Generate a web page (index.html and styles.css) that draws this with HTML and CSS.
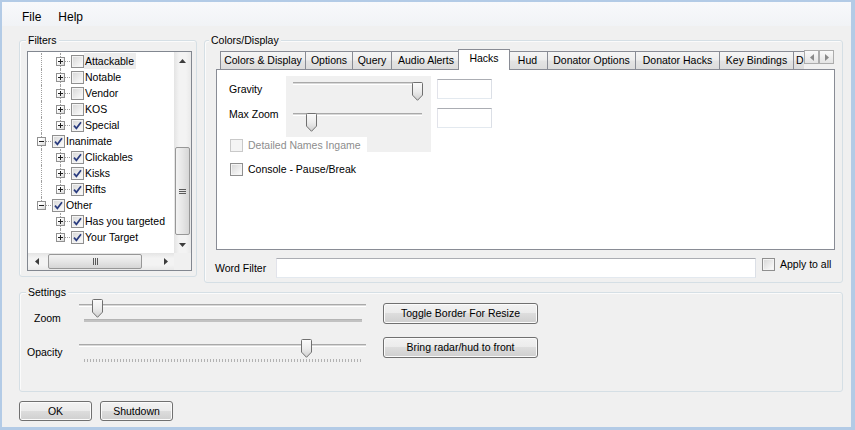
FILE: index.html
```html
<!DOCTYPE html>
<html>
<head>
<meta charset="utf-8">
<link rel="stylesheet" href="styles.css">
</head>
<body>
<div class="window">
  <svg class="defs" width="0" height="0">
    <defs>
      <linearGradient id="thumbGrad" x1="0" y1="0" x2="0" y2="1">
        <stop offset="0" stop-color="#fbfbfb"/>
        <stop offset="0.5" stop-color="#ececec"/>
        <stop offset="1" stop-color="#cfcfcf"/>
      </linearGradient>
    </defs>
  </svg>
  <div class="menubar">
    <span class="menu-item">File</span>
    <span class="menu-item">Help</span>
  </div>
  <div class="main">
    <div class="top-row">
      <section class="group filters">
        <div class="group-title">Filters</div>
        <div class="tree">
          <div class="tree-body">
            <div class="row"><span class="g v"></span><span class="g v h"><span class="exp plus"></span></span><span class="cb"></span><span class="lbl hl">Attackable</span></div>
            <div class="row"><span class="g v"></span><span class="g v h"><span class="exp plus"></span></span><span class="cb"></span><span class="lbl">Notable</span></div>
            <div class="row"><span class="g v"></span><span class="g v h"><span class="exp plus"></span></span><span class="cb"></span><span class="lbl">Vendor</span></div>
            <div class="row"><span class="g v"></span><span class="g v h"><span class="exp plus"></span></span><span class="cb"></span><span class="lbl">KOS</span></div>
            <div class="row"><span class="g v"></span><span class="g vt h"><span class="exp plus"></span></span><span class="cb"><svg width="11" height="11" viewBox="0 0 11 11"><path d="M2 5.6l2.4 2.7L9 2.2" fill="none" stroke="#2a3c7f" stroke-width="1.7"/></svg></span><span class="lbl">Special</span></div>
            <div class="row"><span class="g v h"><span class="exp"></span></span><span class="cb"><svg width="11" height="11" viewBox="0 0 11 11"><path d="M2 5.6l2.4 2.7L9 2.2" fill="none" stroke="#2a3c7f" stroke-width="1.7"/></svg></span><span class="lbl">Inanimate</span></div>
            <div class="row"><span class="g v"></span><span class="g v h"><span class="exp plus"></span></span><span class="cb"><svg width="11" height="11" viewBox="0 0 11 11"><path d="M2 5.6l2.4 2.7L9 2.2" fill="none" stroke="#2a3c7f" stroke-width="1.7"/></svg></span><span class="lbl">Clickables</span></div>
            <div class="row"><span class="g v"></span><span class="g v h"><span class="exp plus"></span></span><span class="cb"><svg width="11" height="11" viewBox="0 0 11 11"><path d="M2 5.6l2.4 2.7L9 2.2" fill="none" stroke="#2a3c7f" stroke-width="1.7"/></svg></span><span class="lbl">Kisks</span></div>
            <div class="row"><span class="g v"></span><span class="g vt h"><span class="exp plus"></span></span><span class="cb"><svg width="11" height="11" viewBox="0 0 11 11"><path d="M2 5.6l2.4 2.7L9 2.2" fill="none" stroke="#2a3c7f" stroke-width="1.7"/></svg></span><span class="lbl">Rifts</span></div>
            <div class="row"><span class="g vt h"><span class="exp"></span></span><span class="cb"><svg width="11" height="11" viewBox="0 0 11 11"><path d="M2 5.6l2.4 2.7L9 2.2" fill="none" stroke="#2a3c7f" stroke-width="1.7"/></svg></span><span class="lbl">Other</span></div>
            <div class="row"><span class="g"></span><span class="g v h"><span class="exp plus"></span></span><span class="cb"><svg width="11" height="11" viewBox="0 0 11 11"><path d="M2 5.6l2.4 2.7L9 2.2" fill="none" stroke="#2a3c7f" stroke-width="1.7"/></svg></span><span class="lbl">Has you targeted</span></div>
            <div class="row"><span class="g"></span><span class="g vt h"><span class="exp plus"></span></span><span class="cb"><svg width="11" height="11" viewBox="0 0 11 11"><path d="M2 5.6l2.4 2.7L9 2.2" fill="none" stroke="#2a3c7f" stroke-width="1.7"/></svg></span><span class="lbl">Your Target</span></div>
          </div>
          <div class="vscroll">
            <div class="sb-btn"><svg width="7" height="4" viewBox="0 0 7 4"><path d="M0 4L3.5 0L7 4Z" fill="#3c3c3c"/></svg></div>
            <div class="sb-track-v"><div class="sb-thumb-v"><span class="grip-h"></span></div></div>
            <div class="sb-btn"><svg width="7" height="4" viewBox="0 0 7 4"><path d="M0 0L3.5 4L7 0Z" fill="#3c3c3c"/></svg></div>
          </div>
          <div class="hscroll">
            <div class="sb-btn"><svg width="4" height="7" viewBox="0 0 4 7"><path d="M4 0L0 3.5L4 7Z" fill="#3c3c3c"/></svg></div>
            <div class="sb-track-h"><div class="sb-thumb-h"><span class="grip-v"></span></div></div>
            <div class="sb-btn"><svg width="4" height="7" viewBox="0 0 4 7"><path d="M0 0L4 3.5L0 7Z" fill="#3c3c3c"/></svg></div>
          </div>
          <div class="sb-corner"></div>
        </div>
      </section>

      <section class="group colors">
        <div class="group-title">Colors/Display</div>
        <div class="tabstrip">
          <div class="tabs">
            <div class="tab first w-cd">Colors &amp; Display</div>
            <div class="tab w-opt">Options</div>
            <div class="tab w-q">Query</div>
            <div class="tab w-aa">Audio Alerts</div>
            <div class="tab sel">Hacks</div>
            <div class="tab w-hud">Hud</div>
            <div class="tab w-do">Donator Options</div>
            <div class="tab w-dh">Donator Hacks</div>
            <div class="tab w-kb">Key Bindings</div>
            <div class="tab w-d">D</div>
          </div>
          <div class="tab-arrows">
            <span class="arrow-btn"><svg width="4" height="7" viewBox="0 0 4 7"><path d="M4 0L0 3.5L4 7Z" fill="#8a8a8a"/></svg></span>
            <span class="arrow-btn"><svg width="4" height="7" viewBox="0 0 4 7"><path d="M0 0L4 3.5L0 7Z" fill="#8a8a8a"/></svg></span>
          </div>
        </div>
        <div class="tabpanel">
          <div class="hacks">
            <div class="lbl-gravity">Gravity</div>
            <div class="lbl-maxzoom">Max Zoom</div>
            <div class="slider-block">
              <div class="trackbar">
                <div class="groove"></div>
                <svg class="thumb" style="left:119px" width="11" height="19" viewBox="0 0 11 19"><path d="M1.5.5h8a1 1 0 0 1 1 1v11.6L5.5 18.3.5 13.1V1.5a1 1 0 0 1 1-1z" fill="url(#thumbGrad)" stroke="#707070"/></svg>
              </div>
              <div class="trackbar second">
                <div class="groove"></div>
                <svg class="thumb" style="left:13px" width="11" height="19" viewBox="0 0 11 19"><path d="M1.5.5h8a1 1 0 0 1 1 1v11.6L5.5 18.3.5 13.1V1.5a1 1 0 0 1 1-1z" fill="url(#thumbGrad)" stroke="#707070"/></svg>
              </div>
            </div>
            <div class="textbox tb1"></div>
            <div class="textbox tb2"></div>
            <div class="detailed">
              <span class="cb disabled"></span>
              <span class="dis-text">Detailed Names Ingame</span>
            </div>
            <div class="console">
              <span class="cb"></span>
              <span>Console - Pause/Break</span>
            </div>
          </div>
        </div>
        <div class="wordfilter">
          <span class="wf-label">Word Filter</span>
          <div class="textbox wf-box"></div>
          <div class="apply">
            <span class="cb"></span>
            <span>Apply to all</span>
          </div>
        </div>
      </section>
    </div>

    <section class="group settings">
      <div class="group-title">Settings</div>
      <div class="settings-grid">
        <div class="lbl-zoom">Zoom</div>
        <div class="trackbar wide">
          <div class="groove"></div>
          <div class="ticks dense"></div>
          <svg class="thumb" style="left:13px" width="11" height="19" viewBox="0 0 11 19"><path d="M1.5.5h8a1 1 0 0 1 1 1v11.6L5.5 18.3.5 13.1V1.5a1 1 0 0 1 1-1z" fill="url(#thumbGrad)" stroke="#707070"/></svg>
        </div>
        <div></div>
        <button class="btn btn-toggle">Toggle Border For Resize</button>
        <div class="lbl-opacity">Opacity</div>
        <div class="trackbar wide opacity">
          <div class="groove"></div>
          <div class="ticks sparse"></div>
          <svg class="thumb" style="left:222px" width="11" height="19" viewBox="0 0 11 19"><path d="M1.5.5h8a1 1 0 0 1 1 1v11.6L5.5 18.3.5 13.1V1.5a1 1 0 0 1 1-1z" fill="url(#thumbGrad)" stroke="#707070"/></svg>
        </div>
        <div></div>
        <button class="btn btn-bring">Bring radar/hud to front</button>
      </div>
    </section>

    <div class="footer">
      <button class="btn btn-foot">OK</button>
      <button class="btn btn-foot">Shutdown</button>
    </div>
  </div>
</div>
</body>
</html>
```

FILE: styles.css
```css
* { box-sizing: border-box; }
html, body { margin: 0; padding: 0; }
body {
  width: 855px;
  height: 430px;
  overflow: hidden;
  background: #b3cbe6;
  font-family: "Liberation Sans", Arial, sans-serif;
  font-size: 10.5px;
  line-height: 13px;
  color: #000;
}
.window {
  width: 855px;
  height: 430px;
  border-style: solid;
  border-color: #b3cbe6;
  border-width: 2px 4px 3px 2px;
  background: #f0f0f0;
  display: flex;
  flex-direction: column;
}
.defs { display: block; flex: none; }

/* menu */
.menubar {
  height: 24px;
  flex: none;
  display: flex;
  align-items: flex-start;
  gap: 17px;
  padding: 8px 0 0 20px;
  font-size: 12px;
  line-height: 14px;
  background: linear-gradient(#f8f9fb, #f1f3f6);
}

.main {
  display: flex;
  flex-direction: column;
  padding-left: 17px;
}
.top-row {
  display: flex;
  align-items: flex-start;
  gap: 7px;
  margin-top: 14px;
}

/* group boxes */
.group {
  border: 1px solid #d5dfe5;
  border-radius: 3px;
  box-shadow: inset 1px 1px 0 #fbfbfb;
}
.group-title {
  margin: -7px 0 0 6px;
  padding: 0 2px;
  width: max-content;
  background: #f0f0f0;
  line-height: 13px;
}

/* filters */
.filters { width: 178px; height: 237px; }
.tree {
  margin: 4px 0 0 7px;
  width: 165px;
  height: 220px;
  border: 1px solid #828790;
  background: #fff;
  display: grid;
  grid-template-columns: 1fr 17px;
  grid-template-rows: 1fr 17px;
}
.tree-body {
  padding: 1px 0 0 4px;
  overflow: hidden;
}
.row {
  display: flex;
  align-items: center;
  height: 16px;
  white-space: nowrap;
}
.g {
  position: relative;
  flex: none;
  width: 19px;
  height: 16px;
  display: flex;
  justify-content: center;
  align-items: flex-start;
}
.g.v::before, .g.vt::before {
  content: "";
  position: absolute;
  left: 9px;
  top: 0;
  bottom: 0;
  border-left: 1px dotted #a0a0a0;
}
.g.vt::before { bottom: 8px; }
.g.h::after {
  content: "";
  position: absolute;
  left: 10px;
  right: 0;
  top: 8px;
  border-top: 1px dotted #a0a0a0;
}
.exp {
  position: relative;
  z-index: 1;
  width: 9px;
  height: 9px;
  margin-top: 4px;
  border: 1px solid #919191;
  background: linear-gradient(135deg, #ffffff 30%, #d9d9d9);
}
.exp::before {
  content: "";
  position: absolute;
  left: 1px;
  top: 3px;
  width: 5px;
  height: 1px;
  background: #1e1e1e;
}
.exp.plus::after {
  content: "";
  position: absolute;
  left: 3px;
  top: 1px;
  width: 1px;
  height: 5px;
  background: #1e1e1e;
}
.cb {
  flex: none;
  width: 13px;
  height: 13px;
  margin-left: 1px;
  border: 1px solid #8f8f8f;
  background: linear-gradient(135deg, #d6d6d6, #f8f8f8 85%);
  box-shadow: inset 0 0 0 1px #f4f4f4;
  display: flex;
  align-items: center;
  justify-content: center;
}
.cb svg { display: block; }
.cb.disabled {
  border-color: #c9c9c9;
  background: #f4f4f4;
  box-shadow: none;
}
.lbl {
  padding: 0 2px 0 1px;
  line-height: 16px;
}
.lbl.hl { background: #ededed; }

/* scrollbars */
.vscroll {
  display: flex;
  flex-direction: column;
  background: linear-gradient(90deg, #e4e4e4, #f3f3f3 30%, #f3f3f3 70%, #e9e9e9);
}
.sb-btn {
  flex: none;
  width: 17px;
  height: 17px;
  display: flex;
  align-items: center;
  justify-content: center;
}
.sb-track-v { flex: 1; }
.sb-thumb-v {
  margin: 78px 1px 0 1px;
  height: 88px;
  border: 1px solid #979797;
  border-radius: 2px;
  background: linear-gradient(90deg, #f3f3f3, #e6e6e6 50%, #d6d6d6);
  display: flex;
  align-items: center;
  justify-content: center;
}
.grip-h {
  width: 7px;
  height: 5px;
  border-top: 1px solid #5a5a5a;
  border-bottom: 1px solid #5a5a5a;
  background: linear-gradient(#5a5a5a, #5a5a5a) center / 100% 1px no-repeat;
}
.hscroll {
  display: flex;
  background: linear-gradient(#e4e4e4, #f3f3f3 30%, #f3f3f3 70%, #e9e9e9);
}
.sb-track-h { flex: 1; display: flex; }
.sb-thumb-h {
  margin: 1px 0 1px 3px;
  width: 94px;
  border: 1px solid #979797;
  border-radius: 2px;
  background: linear-gradient(#f3f3f3, #e6e6e6 50%, #d6d6d6);
  display: flex;
  align-items: center;
  justify-content: center;
}
.grip-v {
  width: 5px;
  height: 7px;
  border-left: 1px solid #5a5a5a;
  border-right: 1px solid #5a5a5a;
  background: linear-gradient(#5a5a5a, #5a5a5a) center / 1px 100% no-repeat;
}
.sb-corner { background: #f0f0f0; }

/* colors / display */
.colors { width: 639px; height: 243px; }
.colors .group-title { margin-left: 4px; }
.tabstrip {
  position: relative;
  z-index: 1;
  display: flex;
  width: 619px;
  height: 21px;
  margin: 2px 0 -1px 11px;
}
.tabs {
  flex: 1;
  min-width: 0;
  height: 21px;
  overflow: hidden;
  display: flex;
  align-items: flex-end;
  padding-left: 4px;
}
.tab {
  flex: none;
  height: 18px;
  margin: 0 0 1px -1px;
  border: 1px solid #898c95;
  border-bottom: none;
  background: linear-gradient(#f5f5f5, #eeeeee 45%, #e3e3e3 55%, #dcdcdc);
  text-align: center;
  line-height: 17px;
  white-space: nowrap;
  overflow: hidden;
}
.tab.first { margin-left: 0; }
.w-cd { width: 86px; }
.w-opt { width: 48px; }
.w-q { width: 40px; }
.w-aa { width: 70px; }
.w-hud { width: 41px; }
.w-do { width: 89px; }
.w-dh { width: 85px; }
.w-kb { width: 75px; }
.w-d { width: 12px; text-align: left; padding-left: 2px; border-right: none; overflow: visible; }
.tab.sel {
  position: relative;
  z-index: 2;
  width: 52px;
  height: 21px;
  margin: 0 -2px 0 -3px;
  background: #fff;
  padding-top: 2px;
  line-height: 13px;
}
.tab-arrows {
  flex: none;
  display: flex;
  align-self: flex-start;
  margin: 1px 1px 0 0;
}
.arrow-btn {
  width: 15px;
  height: 14px;
  border: 1px solid #acacac;
  background: linear-gradient(#fafafa, #e4e4e4);
  display: flex;
  align-items: center;
  justify-content: center;
}
.tabpanel {
  width: 619px;
  height: 181px;
  margin-left: 11px;
  border: 1px solid #898c95;
  background: #fff;
  padding: 6px 0 0 12px;
}
.hacks {
  display: grid;
  grid-template-columns: 57px 145px 6px 55px;
  grid-template-rows: 28px 27px 22px auto;
}
.lbl-gravity { grid-area: 1 / 1; padding-top: 7px; }
.lbl-maxzoom { grid-area: 2 / 1; padding-top: 4px; white-space: nowrap; }
.slider-block {
  grid-area: 1 / 2 / 4 / 3;
  align-self: start;
  height: 76px;
  background: #f0f0f0;
  padding: 1px 9px 0 7px;
}
.trackbar { position: relative; height: 19px; }
.trackbar.second { margin-top: 12px; }
.groove {
  margin-top: 5px;
  height: 3px;
  border-top: 1px solid #a9a9a9;
  border-bottom: 1px solid #ffffff;
  background: #d8d8d8;
}
.thumb { position: absolute; top: 0; display: block; }
.textbox {
  background: #fff;
  border: 1px solid;
  border-color: #abadb3 #dbdfe6 #e3e9ef #e2e3ea;
}
.tb1 { grid-area: 1 / 4; height: 20px; margin-top: 3px; }
.tb2 { grid-area: 2 / 4; height: 20px; margin-top: 4px; }
.detailed {
  grid-area: 3 / 1 / 4 / 3;
  position: relative;
  justify-self: start;
  align-self: end;
  width: 138px;
  height: 16px;
  background: #fff;
  display: flex;
  align-items: center;
  gap: 5px;
  white-space: nowrap;
}
.dis-text { color: #8d8d8d; }
.console {
  grid-area: 4 / 1 / 5 / 3;
  margin-top: 10px;
  display: flex;
  align-items: center;
  gap: 5px;
  white-space: nowrap;
}
.wordfilter {
  display: flex;
  align-items: flex-start;
  margin: 8px 0 0 10px;
  height: 20px;
}
.wf-label { flex: none; width: 61px; line-height: 20px; }
.wf-box { width: 480px; height: 20px; flex: none; }
.apply {
  display: flex;
  align-items: center;
  gap: 5px;
  margin-left: 6px;
  height: 13px;
  white-space: nowrap;
}
.apply .cb { margin-left: 0; }

/* settings */
.settings {
  width: 824px;
  height: 100px;
  margin-top: 9px;
}
.settings-grid {
  display: grid;
  grid-template-columns: 59px 287px 17px 155px;
  grid-template-rows: 38px 30px;
}
.lbl-zoom { padding: 13px 0 0 14px; }
.lbl-opacity { padding: 9px 0 0 7px; }
.trackbar.wide { height: 26px; }
.trackbar.opacity { margin-top: 2px; }
.ticks {
  margin: 12px 4px 0 5px;
  height: 3px;
}
.ticks.dense {
  background: #c2c2c2;
  border-top: 1px solid #b4b4b4;
}
.ticks.sparse {
  background: repeating-linear-gradient(90deg, #b2b2b2 0 1px, transparent 1px 3px);
}
.btn {
  font: inherit;
  color: #000;
  height: 21px;
  padding: 0;
  border: 1px solid #707070;
  border-radius: 3px;
  background: linear-gradient(#f2f2f2, #ebebeb 50%, #dddddd 50%, #cfcfcf);
  box-shadow: inset 0 0 0 1px #fbfbfb;
  text-align: center;
}
.btn-toggle { margin-top: 4px; }
.footer {
  display: flex;
  gap: 8px;
  margin-top: 9px;
}
.btn-foot { width: 73px; height: 20px; }
```
